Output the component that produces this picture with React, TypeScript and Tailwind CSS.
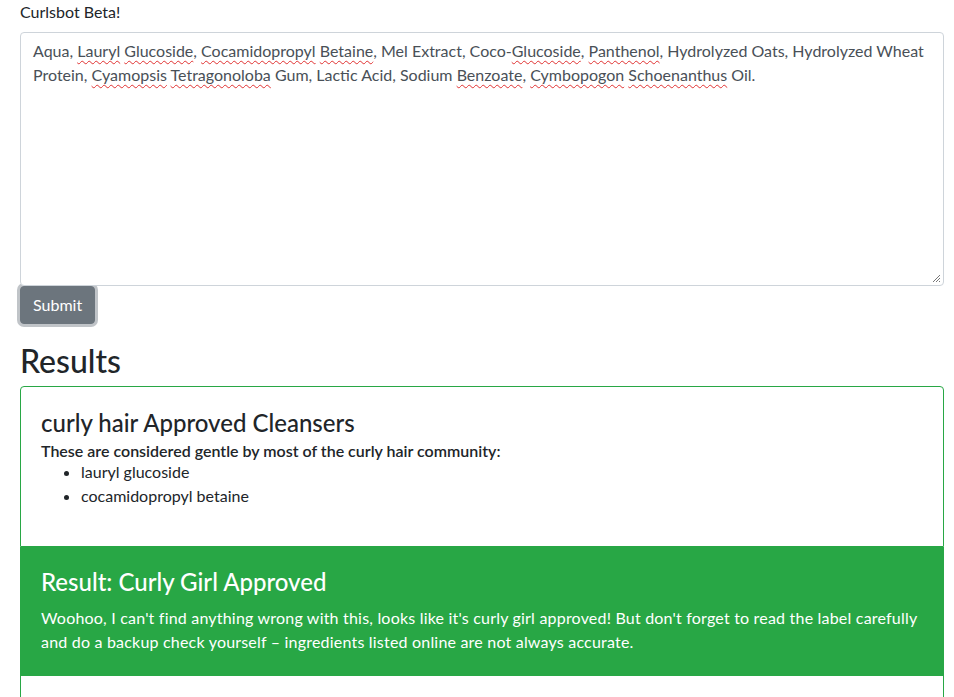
const squiggle =
  "underline decoration-wavy decoration-[#e03131] decoration-1 underline-offset-[3px]";

const approved = ["lauryl glucoside", "cocamidopropyl betaine"];

function Misspelled({ children }: { children: string }) {
  return <span className={squiggle}>{children}</span>;
}

export default function App() {
  return (
    <div className="min-h-screen bg-white pl-5 pr-[10px] font-['Lato','Open_Sans',sans-serif] text-base leading-6 text-[#212529]">
      <p>Curlsbot Beta!</p>

      {/* Ingredient input */}
      <div className="relative mt-2 h-[254px] rounded border border-[#ced4da] bg-white px-3 py-[6px] text-[#495057]">
        <p>
          Aqua, <Misspelled>Lauryl</Misspelled> <Misspelled>Glucoside</Misspelled>,{" "}
          <Misspelled>Cocamidopropyl</Misspelled> <Misspelled>Betaine</Misspelled>, Mel
          Extract, Coco-<Misspelled>Glucoside</Misspelled>,{" "}
          <Misspelled>Panthenol</Misspelled>, Hydrolyzed Oats, Hydrolyzed Wheat Protein,{" "}
          <Misspelled>Cyamopsis</Misspelled> <Misspelled>Tetragonoloba</Misspelled> Gum,
          Lactic Acid, Sodium <Misspelled>Benzoate</Misspelled>,{" "}
          <Misspelled>Cymbopogon</Misspelled> <Misspelled>Schoenanthus</Misspelled> Oil.
        </p>
        <svg
          className="absolute bottom-[2px] right-[2px] h-[9px] w-[9px] text-[#777]"
          viewBox="0 0 9 9"
        >
          <path d="M8 1 L1 8 M8 4 L4 8 M8 7 L7 8" stroke="currentColor" strokeWidth="1" />
        </svg>
      </div>

      <button className="rounded border border-[#6c757d] bg-[#6c757d] px-3 py-[6px] text-base leading-6 text-white shadow-[0_0_0_3px_rgba(130,138,145,0.5)]">
        Submit
      </button>

      <h2 className="mt-[18px] mb-[6px] text-[32px] font-medium leading-[1.2]">Results</h2>

      {/* Result cards */}
      <div className="rounded-t border border-[#28a745] px-5 pt-[22px] pb-5">
        <h4 className="mb-[1px] text-2xl font-medium leading-[1.2]">
          curly hair Approved Cleansers
        </h4>
        <p className="font-semibold">
          These are considered gentle by most of the curly hair community:
        </p>
        <ul className="-mt-[3px] mb-[18px] list-disc pl-10">
          {approved.map((item) => (
            <li key={item}>{item}</li>
          ))}
        </ul>
      </div>

      <div className="border border-[#28a745] bg-[#28a745] p-5 text-white">
        <h4 className="mb-[9px] text-2xl font-medium leading-[1.2]">
          Result: Curly Girl Approved
        </h4>
        <p className="tracking-[0.2px]">
          Woohoo, I can't find anything wrong with this, looks like it's curly girl approved!
          But don't forget to read the label carefully and do a backup check yourself –
          ingredients listed online are not always accurate.
        </p>
      </div>

      <div className="h-24 border border-[#28a745] bg-white"></div>
    </div>
  );
}
